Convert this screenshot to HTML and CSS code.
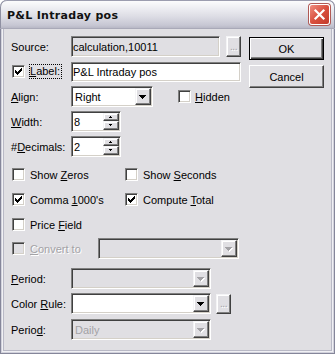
FILE: index.html
```
<!DOCTYPE html>
<html lang="en">
<head>
    <meta charset="UTF-8">
    <title>P&amp;L Intraday pos</title>
    <link rel="stylesheet" href="styles.css">
</head>
<body>
    <div class="window">
        <div class="titlebar">
            <span class="title">P&amp;L Intraday pos</span>
            <span class="close">
                <svg width="21" height="21" viewBox="0 0 21 21"><path d="M6.5 6.5l8 8M14.5 6.5l-8 8" stroke="#fff" stroke-width="2.2" stroke-linecap="square"/></svg>
            </span>
        </div>
        <div class="client">
            <div class="form">
                <div class="row">
                    <span class="lbl">Source:</span>
                    <div class="edit ro w-source">calculation,10011</div>
                    <span class="dots raise dots-source">...</span>
                </div>
                <div class="row">
                    <span class="lbl lbl-chk">
                        <span class="chk"><svg width="13" height="13" viewBox="0 0 13 13"><path d="M3 5h1v1h1v1h1v-1h1v-1h1v-1h1v-1h1v3h-1v1h-1v1h-1v1h-1v1h-1v-1h-1v-1h-1z"/></svg></span>
                        <span class="focus"><u>L</u>abel:</span>
                    </span>
                    <div class="edit w-label">P&amp;L Intraday pos</div>
                </div>
                <div class="row">
                    <span class="lbl"><u>A</u>lign:</span>
                    <div class="edit combo w-align">
                        <span class="val">Right</span>
                        <span class="drop raise"><svg width="14" height="15" viewBox="0 0 14 15"><path d="M3 6h7v1h-1v1h-1v1h-1v1h-1v-1h-1v-1h-1v-1h-1z"/></svg></span>
                    </div>
                    <span class="chk chk-hidden"></span>
                    <span class="txt"><u>H</u>idden</span>
                </div>
                <div class="row">
                    <span class="lbl"><u>W</u>idth:</span>
                    <div class="edit spin">
                        <span class="val">8</span>
                        <span class="spinbtns">
                            <span class="raise"><svg width="14" height="6" viewBox="0 0 14 6"><path d="M6 2h1v1h1v1h-3v-1h1z"/></svg></span>
                            <span class="raise"><svg width="14" height="7" viewBox="0 0 14 7"><path d="M5 2h3v1h-1v1h-1v-1h-1z"/></svg></span>
                        </span>
                    </div>
                </div>
                <div class="row">
                    <span class="lbl">#<u>D</u>ecimals:</span>
                    <div class="edit spin">
                        <span class="val">2</span>
                        <span class="spinbtns">
                            <span class="raise"><svg width="14" height="6" viewBox="0 0 14 6"><path d="M6 2h1v1h1v1h-3v-1h1z"/></svg></span>
                            <span class="raise"><svg width="14" height="7" viewBox="0 0 14 7"><path d="M5 2h3v1h-1v1h-1v-1h-1z"/></svg></span>
                        </span>
                    </div>
                </div>

                <div class="row row-opts">
                    <span class="opt"><span class="chk"></span><span class="txt">Show <u>Z</u>eros</span></span>
                    <span class="opt"><span class="chk"></span><span class="txt">Show <u>S</u>econds</span></span>
                </div>
                <div class="row">
                    <span class="opt">
                        <span class="chk"><svg width="13" height="13" viewBox="0 0 13 13"><path d="M3 5h1v1h1v1h1v-1h1v-1h1v-1h1v-1h1v3h-1v1h-1v1h-1v1h-1v1h-1v-1h-1v-1h-1z"/></svg></span>
                        <span class="txt">Comma <u>1</u>000's</span>
                    </span>
                    <span class="opt">
                        <span class="chk"><svg width="13" height="13" viewBox="0 0 13 13"><path d="M3 5h1v1h1v1h1v-1h1v-1h1v-1h1v-1h1v3h-1v1h-1v1h-1v1h-1v1h-1v-1h-1v-1h-1z"/></svg></span>
                        <span class="txt">Compute <u>T</u>otal</span>
                    </span>
                </div>
                <div class="row">
                    <span class="opt"><span class="chk"></span><span class="txt">Price <u>F</u>ield</span></span>
                </div>
                <div class="row row-convert">
                    <span class="opt opt-convert"><span class="chk off"></span><span class="txt dis"><u>C</u>onvert to</span></span>
                    <div class="edit combo off w-convert">
                        <span class="val"></span>
                        <span class="drop raise"><svg width="14" height="15" viewBox="0 0 14 15"><path d="M4 7h7v1h-1v1h-1v1h-1v1h-1v-1h-1v-1h-1v-1h-1z" fill="#fff"/><path d="M3 6h7v1h-1v1h-1v1h-1v1h-1v-1h-1v-1h-1v-1h-1z" fill="#a3a2a6"/></svg></span>
                    </div>
                </div>

                <div class="row row-period">
                    <span class="lbl"><u>P</u>eriod:</span>
                    <div class="edit combo off w-period">
                        <span class="val"></span>
                        <span class="drop raise"><svg width="14" height="15" viewBox="0 0 14 15"><path d="M4 7h7v1h-1v1h-1v1h-1v1h-1v-1h-1v-1h-1v-1h-1z" fill="#fff"/><path d="M3 6h7v1h-1v1h-1v1h-1v1h-1v-1h-1v-1h-1v-1h-1z" fill="#a3a2a6"/></svg></span>
                    </div>
                </div>
                <div class="row">
                    <span class="lbl">Color <u>R</u>ule:</span>
                    <div class="edit combo w-period">
                        <span class="val"></span>
                        <span class="drop raise"><svg width="14" height="15" viewBox="0 0 14 15"><path d="M3 6h7v1h-1v1h-1v1h-1v1h-1v-1h-1v-1h-1v-1h-1z"/></svg></span>
                    </div>
                    <span class="dots raise dots-rule">...</span>
                </div>
                <div class="row row-last">
                    <span class="lbl">Perio<u>d</u>:</span>
                    <div class="edit combo off w-period">
                        <span class="val grey">Daily</span>
                        <span class="drop raise"><svg width="14" height="15" viewBox="0 0 14 15"><path d="M4 7h7v1h-1v1h-1v1h-1v1h-1v-1h-1v-1h-1v-1h-1z" fill="#fff"/><path d="M3 6h7v1h-1v1h-1v1h-1v1h-1v-1h-1v-1h-1v-1h-1z" fill="#a3a2a6"/></svg></span>
                    </div>
                </div>
            </div>
            <div class="actions">
                <span class="btn default">OK</span>
                <span class="btn">Cancel</span>
            </div>
        </div>
    </div>
</body>
</html>
```

FILE: styles.css
```
body {
    margin: 0;
    background: #fff;
    font-family: "Liberation Sans", Arial, sans-serif;
    font-size: 11px;
    color: #000;
}
.window {
    width: 335px;
    height: 354px;
    box-sizing: border-box;
    padding: 0 4px 5px 3px;
    background: #e0dfe3;
    border-radius: 7px 7px 0 0;
    box-shadow: inset 0 0 0 1px #85869a, inset 0 0 0 2px #d2d2dc, inset 0 0 0 3px #f0f0f4, inset 0 0 0 4px #b9b9c6;
    overflow: hidden;
}
.titlebar {
    display: flex;
    align-items: center;
    justify-content: space-between;
    height: 28px;
    margin: 0 -4px 0 -3px;
    padding: 0 5px 0 7px;
    border-radius: 7px 7px 0 0;
    border-bottom: 1px solid #a9a9b8;
    background: linear-gradient(#fefefe, #f0f0f4 25%, #dcdce4 60%, #c7c7d3 90%, #b8b8c6);
    box-shadow: inset 1px 0 #8f90a2, inset -1px 0 #8f90a2, inset 0 1px #9c9daf;
}
.title {
    font-family: "DejaVu Sans", sans-serif;
    font-weight: bold;
    font-size: 11px;
    letter-spacing: 0.3px;
    color: #111;
    padding-top: 2px;
}
.close {
    width: 21px;
    height: 21px;
    box-sizing: border-box;
    border: 1px solid #fff;
    border-radius: 3px;
    background: linear-gradient(135deg, #f08e80, #d9503f 50%, #c23b2b);
    box-shadow: 0 0 0 1px #b05a55;
    position: relative;
    margin-top: 1px;
}
.close svg {
    position: absolute;
    left: -1px;
    top: -1px;
}
.client {
    display: flex;
    padding: 7px 0 0 8px;
}
.form {
    width: 230px;
    flex: none;
}
.actions {
    display: flex;
    flex-direction: column;
    gap: 5px;
    margin-left: 8px;
    padding-top: 1px;
}
.row {
    display: flex;
    align-items: center;
    height: 21px;
    margin-top: 4px;
}
.row:first-child {
    margin-top: 0;
}
.row-opts {
    margin-top: 7px;
}
.row-convert {
    margin-top: 3px;
}
.row-period {
    margin-top: 9px;
}
.row-last {
    margin-top: 5px;
}
.lbl {
    width: 60px;
    flex: none;
    white-space: nowrap;
}
.lbl-chk {
    display: flex;
    align-items: center;
}
.lbl-chk .chk {
    margin-left: 1px;
}
.focus {
    margin-left: 5px;
    outline: 1px dotted #000;
    outline-offset: 0;
    padding: 0 1px 0 0;
    line-height: 13px;
}
.edit {
    box-sizing: border-box;
    height: 21px;
    display: flex;
    align-items: center;
    border: 1px solid;
    border-color: #808080 #fff #fff #808080;
    box-shadow: inset 1px 1px #404040, inset -1px -1px #d4d0c8;
    background: #fff;
    padding: 0 1px;
    white-space: nowrap;
    flex: none;
}
.edit.ro {
    background: #e0dfe3;
}
.w-source { width: 149px; }
.w-label { width: 170px; height: 20px; }
.w-align { width: 82px; }
.w-convert { width: 141px; }
.w-period { width: 140px; }
.raise {
    box-sizing: border-box;
    background: #e0dfe3;
    border: 1px solid;
    border-color: #f4f4f6 #404040 #404040 #f4f4f6;
    box-shadow: inset -1px -1px #808080, inset 1px 1px #fff;
    display: flex;
    align-items: center;
    justify-content: center;
}
.dots {
    width: 15px;
    height: 21px;
    color: #a3a2a6;
    text-shadow: 1px 1px #fff;
    align-items: flex-end;
    padding-bottom: 4px;
    letter-spacing: -0.5px;
    font-size: 10px;
}
.dots-source { margin-left: 6px; }
.dots-rule { margin-left: 5px; height: 20px; }
.combo {
    padding: 1px;
}
.combo .val {
    flex: 1;
    padding-left: 2px;
}
.combo .drop {
    width: 16px;
    height: 17px;
}
.combo.off {
    background: #e0dfe3;
}
.grey {
    color: #a3a2a6;
}
.spin {
    width: 50px;
    padding: 1px;
}
.spin .val {
    flex: 1;
    padding-left: 1px;
}
.spinbtns {
    display: flex;
    flex-direction: column;
    width: 16px;
}
.spinbtns .raise {
    height: 8px;
}
.spinbtns .raise + .raise {
    height: 9px;
}
.chk {
    box-sizing: border-box;
    width: 13px;
    height: 13px;
    flex: none;
    border: 1px solid;
    border-color: #808080 #fff #fff #808080;
    box-shadow: inset 1px 1px #404040, inset -1px -1px #d4d0c8;
    background: #fff;
    position: relative;
}
.chk svg {
    position: absolute;
    left: -1px;
    top: -1px;
}
.chk.off {
    background: #e0dfe3;
}
.chk-hidden {
    margin-left: 25px;
}
.txt {
    margin-left: 4px;
    white-space: nowrap;
}
.opt {
    display: flex;
    align-items: center;
    width: 113px;
    flex: none;
}
.opt .chk {
    margin-left: 1px;
}
.opt .txt {
    margin-left: 5px;
}
.opt-convert {
    width: 87px;
}
.dis {
    color: #a3a2a6;
    text-shadow: 1px 1px #fff;
}
.btn {
    box-sizing: border-box;
    width: 75px;
    height: 23px;
    display: flex;
    align-items: center;
    justify-content: center;
    background: #e0dfe3;
    border: 1px solid;
    border-color: #fff #404040 #404040 #fff;
    box-shadow: inset -1px -1px #808080;
}
.btn.default {
    border-color: #000;
    box-shadow: inset 1px 1px #fff, inset -1px -1px #404040, inset -2px -2px #808080;
}
```
